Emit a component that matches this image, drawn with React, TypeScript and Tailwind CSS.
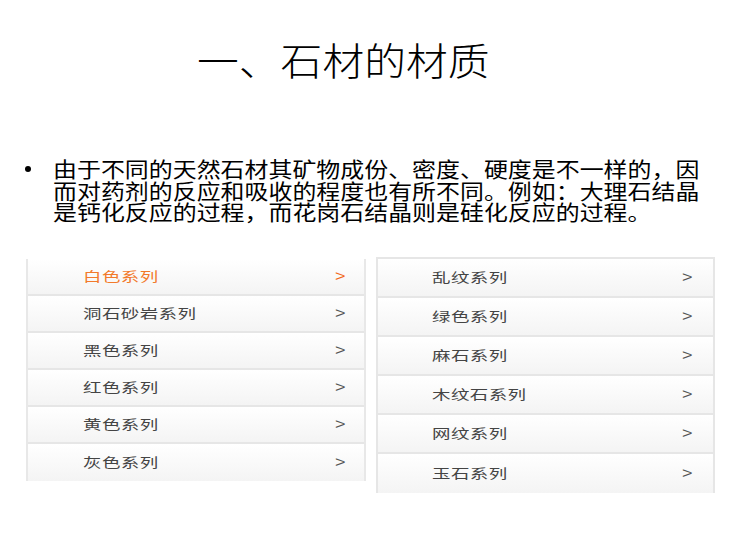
const leftItems = ['白色系列', '洞石砂岩系列', '黑色系列', '红色系列', '黄色系列', '灰色系列'];
const rightItems = ['乱纹系列', '绿色系列', '麻石系列', '木纹石系列', '网纹系列', '玉石系列'];

const bodyLines = [
  '由于不同的天然石材其矿物成份、密度、硬度是不一样的，因',
  '而对药剂的反应和吸收的程度也有所不同。例如：大理石结晶',
  '是钙化反应的过程，而花岗石结晶则是硅化反应的过程。',
];

function MenuRow({ label, active, last, tall }: { label: string; active?: boolean; last?: boolean; tall?: boolean }) {
  return (
    <div
      className={`flex items-center justify-between bg-linear-to-b from-white to-[#f4f4f4] ${
        tall ? 'h-[39px] pl-[54px] pr-[21px]' : 'h-[37px] pl-[55px] pr-[19px]'
      } ${last ? '' : 'border-b-2 border-[#e6e6e6]'}`}
    >
      <span
        className={`inline-block origin-left scale-x-[1.42] text-[13px] tracking-[0.3px] ${
          active ? 'text-[#f27a2b]' : 'text-[#444]'
        }`}
      >
        {label}
      </span>
      <span
        className={`inline-block scale-x-[1.2] text-[15px] font-['Liberation_Sans',sans-serif] ${
          active ? 'text-[#f26a1b]' : 'text-[#555]'
        }`}
      >
        &gt;
      </span>
    </div>
  );
}

export default function App() {
  return (
    <div className="w-[750px] h-[537px] bg-white overflow-hidden font-['Noto_Sans_CJK_SC',sans-serif] text-black">
      {/* title */}
      <div className="pt-[35px] pl-[197px] h-[84px]">
        <span className="inline-block origin-left scale-x-[1.1] text-[38px] leading-[48px] font-light">
          一、石材的材质
        </span>
      </div>

      {/* bullet text */}
      <div className="mt-[74px] flex">
        <div className="w-[53px] pl-[25px] pt-[8px]">
          <div className="w-[6px] h-[6px] rounded-full bg-black" />
        </div>
        <div className="origin-left scale-x-[1.14] text-[21px] leading-[21.5px]">
          {bodyLines.map((l) => (
            <div key={l} className="whitespace-nowrap">{l}</div>
          ))}
        </div>
      </div>

      {/* menus */}
      <div className="mt-[36px] flex items-start gap-[10px] pl-[26px]">
        <div className="w-[340px] border-l-2 border-r-2 border-[#e8e8e8]">
          {leftItems.map((t, i) => (
            <MenuRow key={t} label={t} active={i === 0} last={i === leftItems.length - 1} />
          ))}
        </div>
        <div className="-mt-[2px] w-[339px] border-l-2 border-r-2 border-t-2 border-[#e6e6e6]">
          {rightItems.map((t, i) => (
            <MenuRow key={t} label={t} tall last={i === rightItems.length - 1} />
          ))}
        </div>
      </div>
    </div>
  );
}
